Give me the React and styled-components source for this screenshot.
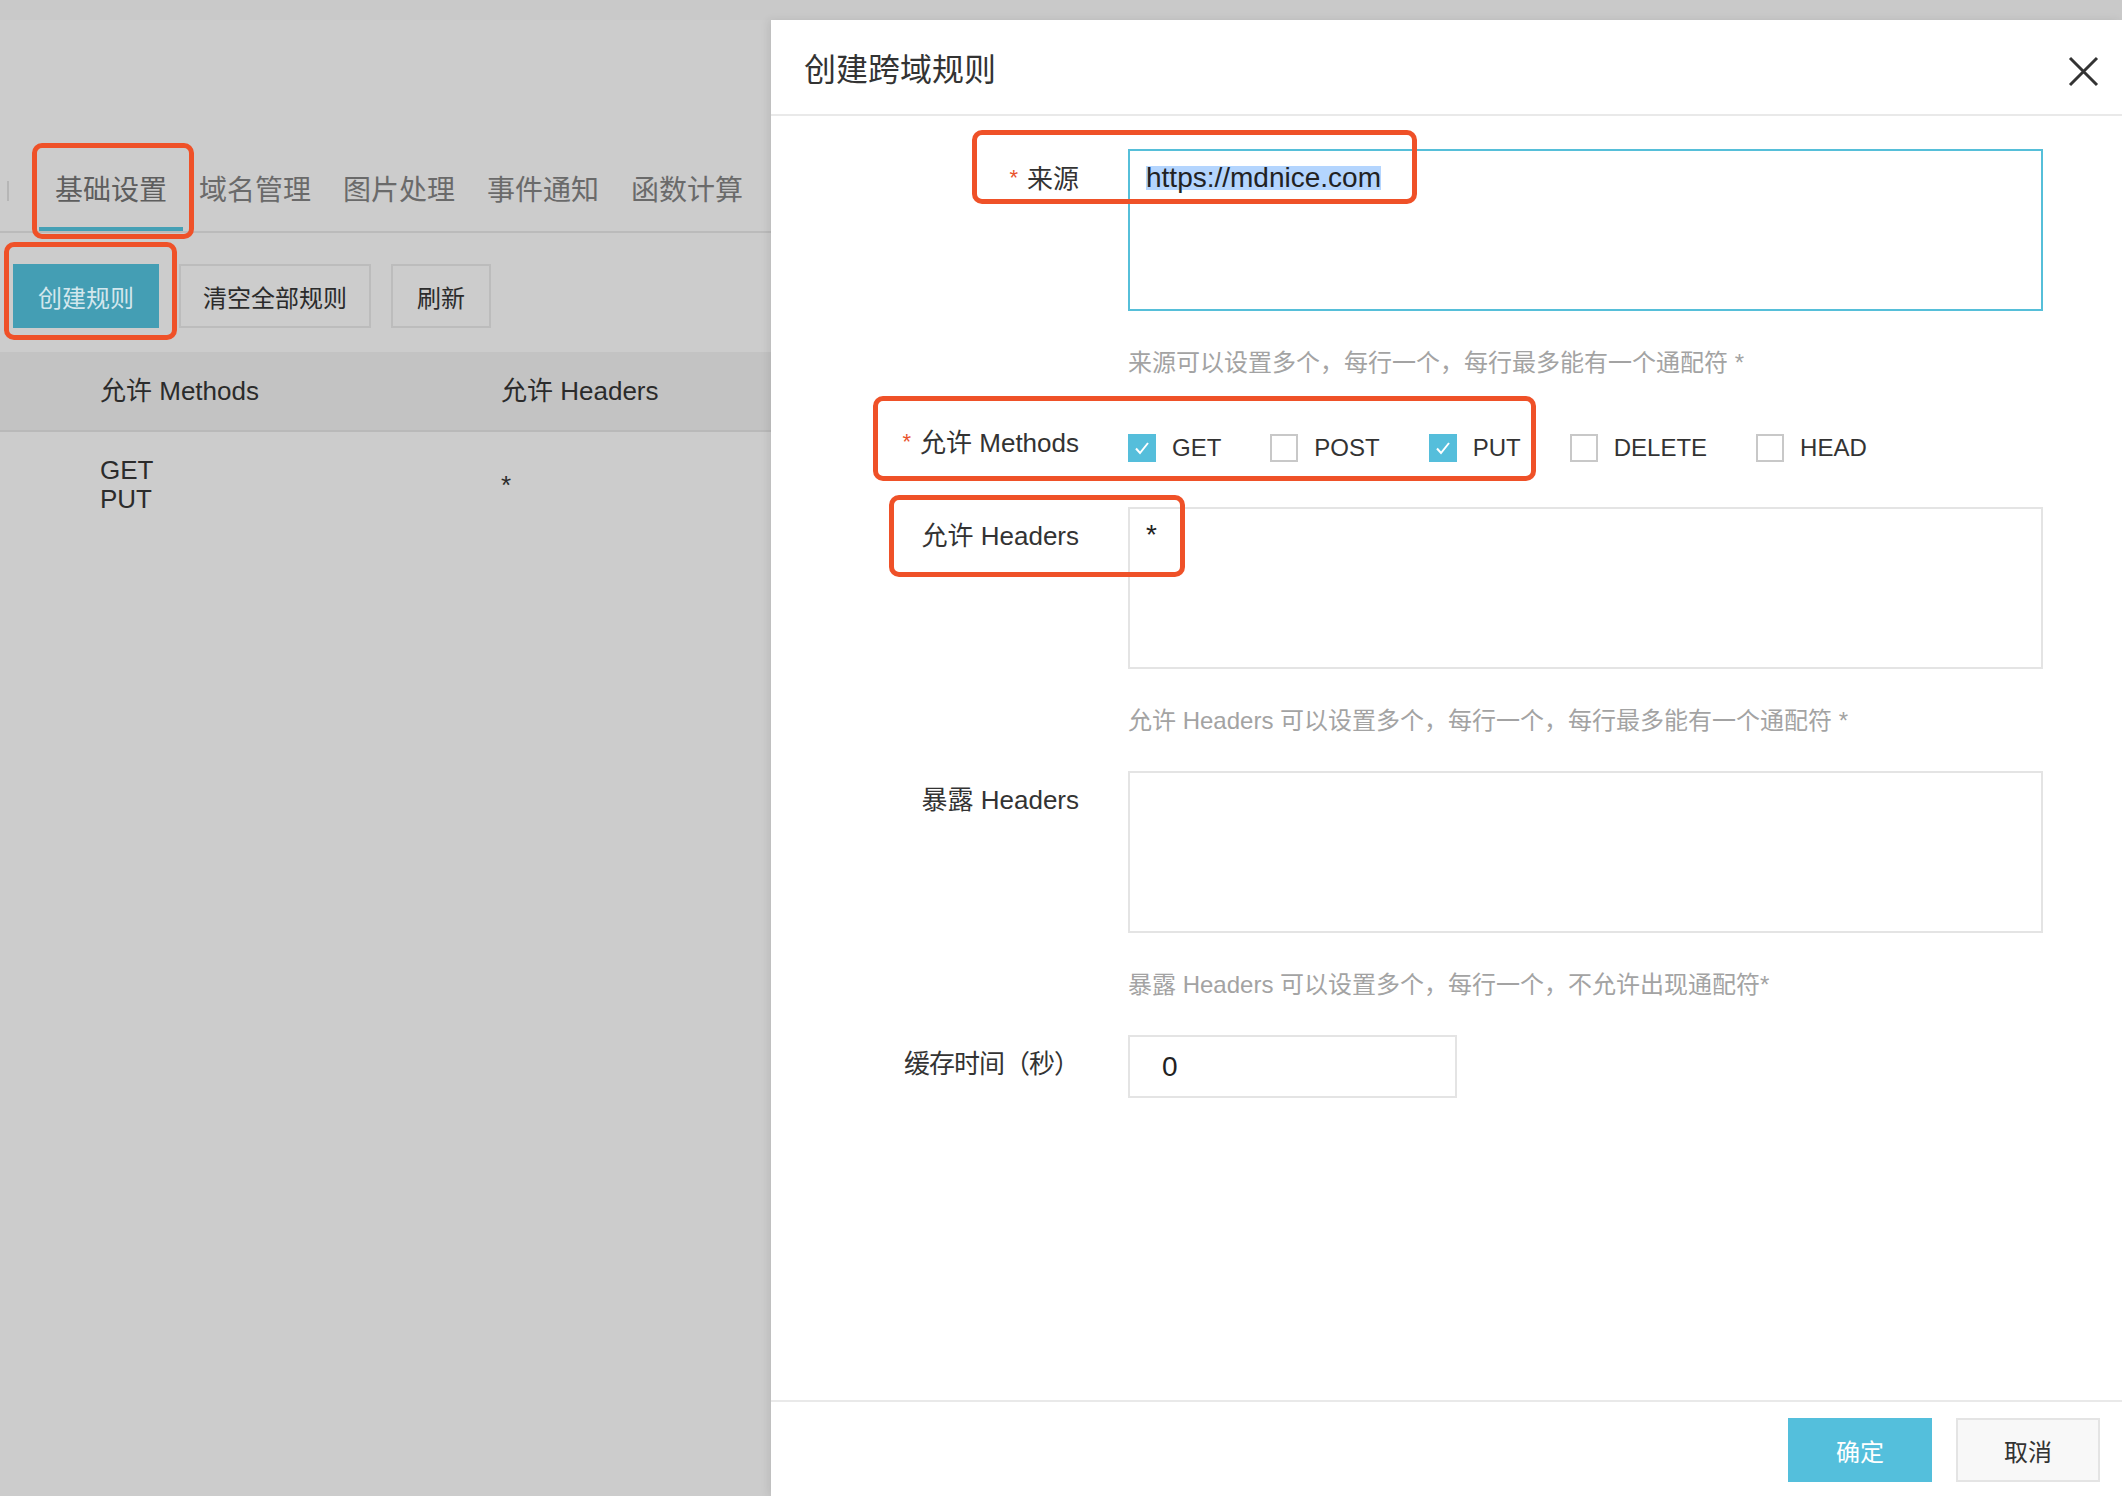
import React from 'react';
import styled, { createGlobalStyle } from 'styled-components';

const FONT = `"Liberation Sans", "Noto Sans CJK SC", sans-serif`;

const GlobalStyle = createGlobalStyle`
  html, body { margin: 0; padding: 0; }
  body { font-family: ${FONT}; background: #cccccc; }
  * { box-sizing: border-box; }
`;

const Screen = styled.div`
  position: relative;
  width: 2122px;
  height: 1496px;
  overflow: hidden;
  display: flex;
  flex-direction: column;
  background: #cccccc;
`;

const TopStrip = styled.div`
  flex: none;
  height: 20px;
  background: #c9c9c9;
  box-shadow: 0 2px 4px rgba(0, 0, 0, 0.05);
`;

const Main = styled.div`
  flex: 1;
  min-height: 0;
  display: grid;
  grid-template-columns: 771px 1fr;
`;

/* ---------- left (masked) page ---------- */
const LeftPanel = styled.div`
  padding-top: 131px;
  background: #cccccc;
`;

const TabBar = styled.div`
  display: flex;
  align-items: flex-end;
  height: 82px;
  border-bottom: 2px solid #bbbbbb;
`;

const TabSeparator = styled.span`
  align-self: center;
  width: 2px;
  height: 20px;
  margin: 0 30px 0 7px;
  background: #b6b6b6;
`;

const Tab = styled.div`
  height: 80px;
  padding: 3px 16px 0;
  font-size: 28px;
  line-height: 73px;
  color: ${(p) => (p.$active ? '#5e5e5e' : '#6a6a6a')};
  border-bottom: 4px solid ${(p) => (p.$active ? '#45a0b5' : 'transparent')};
  white-space: nowrap;
`;

const ButtonRow = styled.div`
  display: flex;
  gap: 20px;
  margin-top: 31px;
  padding-left: 13px;
`;

const PageButton = styled.div`
  height: 64px;
  padding: 0 ${(p) => p.$pad ?? 22}px;
  display: flex;
  align-items: center;
  font-size: 24px;
  border: 2px solid ${(p) => (p.$primary ? '#449eb4' : '#bcbcbc')};
  background: ${(p) => (p.$primary ? '#449eb4' : '#cccccc')};
  color: ${(p) => (p.$primary ? '#d3e7ed' : '#2b2b2b')};
  white-space: nowrap;
`;

const Table = styled.div`
  margin-top: 24px;
`;

const TableHead = styled.div`
  display: grid;
  grid-template-columns: 500px 1fr;
  align-items: center;
  height: 80px;
  padding-bottom: 5px;
  background: #c3c3c3;
  border-bottom: 2px solid #b9b9b9;
  font-size: 26px;
  color: #2b2b2b;
`;

const TableRow = styled.div`
  display: grid;
  grid-template-columns: 500px 1fr;
  align-items: center;
  padding-top: 24px;
  font-size: 26px;
  line-height: 29px;
  color: #2b2b2b;
`;

const Cell = styled.div`
  padding-left: ${(p) => (p.$first ? '100px' : '1px')};
`;

/* ---------- dialog ---------- */
const Dialog = styled.div`
  min-height: 0;
  display: flex;
  flex-direction: column;
  background: #ffffff;
  box-shadow: -3px 0 8px rgba(0, 0, 0, 0.08);
`;

const DialogHeader = styled.div`
  flex: none;
  height: 96px;
  display: flex;
  align-items: center;
  justify-content: space-between;
  padding: 0 23px 0 33px;
  border-bottom: 2px solid #e9e9e9;
`;

const DialogTitle = styled.div`
  font-size: 32px;
  color: #333333;
`;

const CloseButton = styled.div`
  width: 31px;
  height: 31px;
  margin-top: 8px;
  display: flex;
`;

const DialogBody = styled.div`
  flex: 1;
  min-height: 0;
  padding: 33px 79px 0 0;
`;

const FormItem = styled.div`
  display: grid;
  grid-template-columns: 308px 1fr;
  column-gap: 49px;
  margin-bottom: ${(p) => p.$mb ?? 32}px;
`;

const Label = styled.div`
  padding-top: 9px;
  font-size: 26px;
  line-height: 40px;
  text-align: right;
  color: #333333;
  white-space: nowrap;
  letter-spacing: ${(p) => p.$tight ? '-1px' : 'normal'};
`;

const Required = styled.span`
  color: #e9532d;
  font-size: 22px;
  margin-right: 9px;
  vertical-align: 3px;
`;

const Control = styled.div`
  min-width: 0;
`;

const TextBox = styled.div`
  height: 162px;
  padding: ${(p) => (p.$focused ? '7px 16px' : '6px 16px')};
  border: 2px solid ${(p) => (p.$focused ? '#56bfd9' : '#e4e4e4')};
  font-size: 28px;
  line-height: 40px;
  color: #222222;
  background: #ffffff;
`;

const Selected = styled.span`
  display: inline-block;
  height: 24px;
  line-height: 24px;
  background: #b4d5fe;
`;

const Hint = styled.div`
  margin-top: 34px;
  font-size: 24px;
  line-height: 36px;
  color: #a3a3a3;
  white-space: nowrap;
`;

const CheckGroup = styled.div`
  height: 70px;
  display: flex;
  align-items: center;
  gap: 49px;
`;

const CheckOption = styled.label`
  display: flex;
  align-items: center;
  gap: 16px;
  font-size: 24px;
  color: #333333;
`;

const Box = styled.span`
  width: 28px;
  height: 28px;
  display: flex;
  align-items: center;
  justify-content: center;
  background: ${(p) => (p.$checked ? '#55bedb' : '#ffffff')};
  border: 2px solid ${(p) => (p.$checked ? '#55bedb' : '#c8c8c8')};
`;

const NumberInput = styled.div`
  width: 329px;
  height: 63px;
  padding-left: 32px;
  display: flex;
  align-items: center;
  border: 2px solid #e4e4e4;
  font-size: 28px;
  color: #222222;
`;

const DialogFooter = styled.div`
  flex: none;
  height: 96px;
  display: flex;
  justify-content: flex-end;
  gap: 24px;
  padding: 16px 22px 0;
  border-top: 2px solid #e9e9e9;
`;

const FooterButton = styled.div`
  width: 144px;
  height: 64px;
  display: flex;
  align-items: center;
  justify-content: center;
  font-size: 24px;
  background: ${(p) => (p.$primary ? '#54bfdc' : '#f8f8f8')};
  border: 2px solid ${(p) => (p.$primary ? '#54bfdc' : '#e4e4e4')};
  color: ${(p) => (p.$primary ? '#ffffff' : '#333333')};
`;

/* ---------- annotation boxes drawn over the screenshot ---------- */
const Annotation = styled.div`
  position: absolute;
  border: 5px solid #ef5128;
  border-radius: 10px;
  pointer-events: none;
`;

const Check = () => (
  <svg width="18" height="18" viewBox="0 0 18 18">
    <path d="M3 9.5 L7 14 L15 4" fill="none" stroke="#ffffff" strokeWidth="2" />
  </svg>
);

const CloseIcon = () => (
  <svg width="31" height="31" viewBox="0 0 31 31">
    <path d="M2 2 L29 29 M29 2 L2 29" stroke="#333333" strokeWidth="3" fill="none" />
  </svg>
);

const tabs = ['基础设置', '域名管理', '图片处理', '事件通知', '函数计算'];
const methods = [
  { name: 'GET', checked: true },
  { name: 'POST', checked: false },
  { name: 'PUT', checked: true },
  { name: 'DELETE', checked: false },
  { name: 'HEAD', checked: false },
];

const annotations = [
  { left: 32, top: 143, width: 162, height: 96 },
  { left: 4, top: 242, width: 173, height: 98 },
  { left: 972, top: 130, width: 445, height: 74 },
  { left: 873, top: 396, width: 663, height: 85 },
  { left: 889, top: 495, width: 296, height: 82 },
];

export default function App() {
  return (
    <>
      <GlobalStyle />
      <Screen>
        <TopStrip />
        <Main>
          <LeftPanel>
            <TabBar>
              <TabSeparator />
              {tabs.map((t, i) => (
                <Tab key={t} $active={i === 0}>
                  {t}
                </Tab>
              ))}
            </TabBar>
            <ButtonRow>
              <PageButton $primary $pad={23}>创建规则</PageButton>
              <PageButton>清空全部规则</PageButton>
              <PageButton $pad={24}>刷新</PageButton>
            </ButtonRow>
            <Table>
              <TableHead>
                <Cell $first>允许 Methods</Cell>
                <Cell>允许 Headers</Cell>
              </TableHead>
              <TableRow>
                <Cell $first>
                  GET
                  <br />
                  PUT
                </Cell>
                <Cell>*</Cell>
              </TableRow>
            </Table>
          </LeftPanel>

          <Dialog>
            <DialogHeader>
              <DialogTitle>创建跨域规则</DialogTitle>
              <CloseButton>
                <CloseIcon />
              </CloseButton>
            </DialogHeader>
            <DialogBody>
              <FormItem>
                <Label>
                  <Required>*</Required>来源
                </Label>
                <Control>
                  <TextBox $focused>
                    <Selected>https://mdnice.com</Selected>
                  </TextBox>
                  <Hint>来源可以设置多个，每行一个，每行最多能有一个通配符 *</Hint>
                </Control>
              </FormItem>

              <FormItem $mb={24}>
                <Label>
                  <Required>*</Required>允许 Methods
                </Label>
                <Control>
                  <CheckGroup>
                    {methods.map((m) => (
                      <CheckOption key={m.name}>
                        <Box $checked={m.checked}>{m.checked && <Check />}</Box>
                        {m.name}
                      </CheckOption>
                    ))}
                  </CheckGroup>
                </Control>
              </FormItem>

              <FormItem>
                <Label>允许 Headers</Label>
                <Control>
                  <TextBox>*</TextBox>
                  <Hint>允许 Headers 可以设置多个，每行一个，每行最多能有一个通配符 *</Hint>
                </Control>
              </FormItem>

              <FormItem>
                <Label>暴露 Headers</Label>
                <Control>
                  <TextBox />
                  <Hint>暴露 Headers 可以设置多个，每行一个，不允许出现通配符*</Hint>
                </Control>
              </FormItem>

              <FormItem>
                <Label $tight>缓存时间（秒）</Label>
                <Control>
                  <NumberInput>0</NumberInput>
                </Control>
              </FormItem>
            </DialogBody>
            <DialogFooter>
              <FooterButton $primary>确定</FooterButton>
              <FooterButton>取消</FooterButton>
            </DialogFooter>
          </Dialog>
        </Main>

        {annotations.map((a, i) => (
          <Annotation key={i} style={{ left: a.left, top: a.top, width: a.width, height: a.height }} />
        ))}
      </Screen>
    </>
  );
}
